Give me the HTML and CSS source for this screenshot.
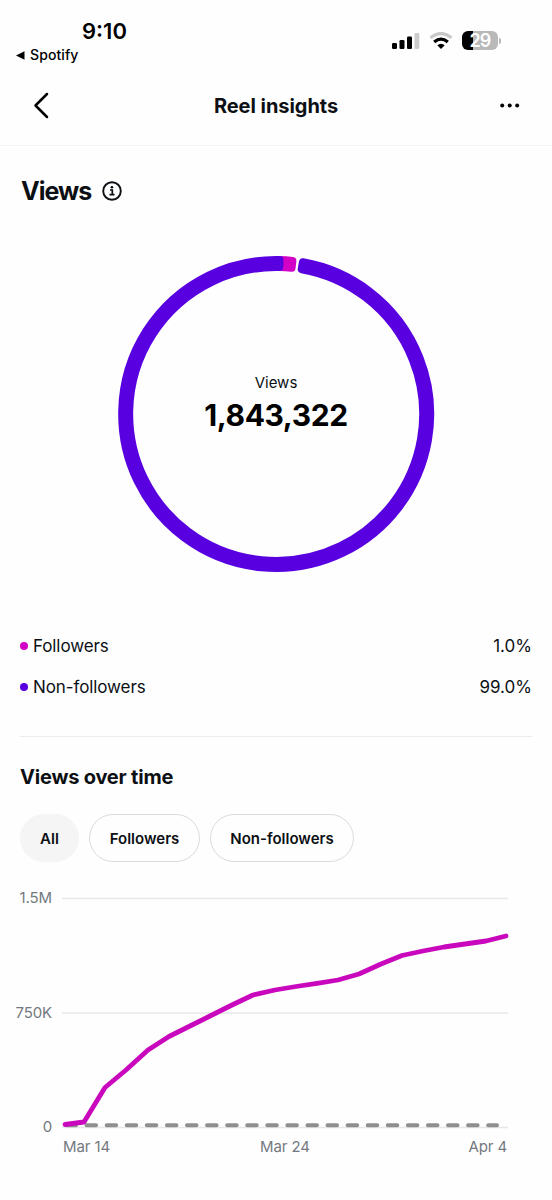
FILE: index.html
```html
<!DOCTYPE html>
<html lang="en">
<head>
<meta charset="utf-8">
<title>Reel insights</title>
<link rel="stylesheet" href="styles.css">
</head>
<body>
<div class="status">
  <div class="status-left">
    <div class="clock">9:10</div>
    <div class="return-app"><svg width="9" height="9" viewBox="0 0 9 9"><path d="M0 4.5 8.500 .3V8.700Z"/></svg><span>Spotify</span></div>
  </div>
  <div class="status-right">
    <svg class="signal" width="28" height="18" viewBox="0 0 28 18"><rect x="0" y="11" width="5" height="6" rx="1.3"/><rect x="7.500" y="8" width="5" height="9" rx="1.3"/><rect x="15" y="4.500" width="5" height="12.500" rx="1.3"/><rect x="22.500" y="1" width="4.800" height="16" rx="1.3" fill="#ccc"/></svg>
    <svg class="wifi" width="24" height="18" viewBox="0 0 24 18"><path d="M1.500 5.700Q12-2.700 22.500 5.700" fill="none" stroke="#c8c8c8" stroke-width="3.200"/><path d="M5.200 10Q12 4.200 18.800 10" fill="none" stroke="#000" stroke-width="3.300"/><path d="M8.300 13.300Q12 10 15.700 13.300L12 17Z"/></svg>
    <div class="battery"><span>29</span></div>
    <div class="battery-tip"></div>
  </div>
</div>
<header class="header">
  <svg width="40" height="30" viewBox="0 0 40 30"><path d="M27 4 15.500 15.500 27 27" fill="none" stroke="#000" stroke-width="2.500" stroke-linecap="round" stroke-linejoin="round"/></svg>
  <h1>Reel insights</h1>
  <svg class="more" width="40" height="30" viewBox="0 0 40 30"><circle cx="10.200" cy="15.500" r="2"/><circle cx="17.700" cy="15.500" r="2"/><circle cx="25.200" cy="15.500" r="2"/></svg>
</header>
<main>
  <section class="views">
    <div class="views-title">
      <h2>Views</h2>
      <svg width="20" height="20" viewBox="0 0 20 20"><circle cx="10" cy="10" r="8.800" fill="none" stroke="#0c1014" stroke-width="1.900"/><circle cx="9.900" cy="6.300" r="1.300"/><path d="M8 9h2.300v4.500M7.500 13.700h5" fill="none" stroke="#0c1014" stroke-width="1.700"/></svg>
    </div>
    <div class="donut">
      <svg width="320" height="320" viewBox="116 254 320 320" stroke-width="8" stroke-linejoin="round">
        <path d="M279.500 260A154 154 0 0 1 292.400 260.900L291.600 267.800A147 147 0 0 0 279.300 267Z" fill="#d300c5" stroke="#d300c5"/>
        <path d="M302.900 262.300A154 154 0 1 1 279.500 260L279.300 267A147 147 0 1 0 301.700 269.200Z" fill="#5800df" stroke="#5800df"/>
      </svg>
      <div class="donut-label"><span class="donut-name">Views</span><strong>1,843,322</strong></div>
    </div>
    <div class="legend">
      <div class="row"><i class="dot pink"></i><span class="name">Followers</span><span class="value">1.0%</span></div>
      <div class="row"><i class="dot violet"></i><span class="name">Non-followers</span><span class="value">99.0%</span></div>
    </div>
  </section>
  <section class="time">
    <h3>Views over time</h3>
    <div class="chips">
      <button class="chip active">All</button><button class="chip followers">Followers</button><button class="chip non">Non-followers</button>
    </div>
    <div class="chart">
      <div class="y-axis"><span>1.5M</span><span>750K</span><span>0</span></div>
      <div class="plot">
        <svg width="450" height="240" viewBox="62 893 450 240" fill="none">
          <path d="M62 898.500H508M62 1013H508M62 1127.500H508" stroke="#e6e7e8" stroke-width="1.300"/>
          <path d="M66.500 1125.300H497" stroke="#8e8e8e" stroke-width="4" stroke-linecap="round" stroke-dasharray="9.500 10.580"/>
          <path d="M65 1124.500 84 1122 105 1087.500 126 1070 148 1050 169 1036.500 190 1026 211 1015.500 232 1005 253 995 275 990 296 986.500 317 983.300 338 980 359 974 381 964 402 955.500 423 951 444 947 465 944 486 941 506 936" stroke="#c908bd" stroke-width="4.800" stroke-linecap="round" stroke-linejoin="round"/>
        </svg>
        <div class="x-axis"><span>Mar 14</span><span>Mar 24</span><span>Apr 4</span></div>
      </div>
    </div>
  </section>
</main>
</body>
</html>
```
FILE: styles.css
```css
* { box-sizing: border-box; }
body { margin: 0; height: 1200px; background: #fefefe; color: #0c1014; font-family: Inter, "Noto Sans", sans-serif; overflow: hidden; }
h1, h2, h3 { margin: 0; font-weight: 700; white-space: nowrap; }
svg { display: block; flex: none; }
.status { display: flex; justify-content: space-between; height: 76px; color: #000; }
.status-left { padding-top: 17px; }
.clock { padding-left: 82px; font-size: 22px; line-height: 29px; font-weight: 600; }
.return-app { display: flex; align-items: center; gap: 5px; padding-left: 16px; font-size: 14px; line-height: 18px; font-weight: 500; letter-spacing: .1px; }
.status-right { display: flex; align-items: flex-start; padding: 31px 51px 0 0; }
.wifi { margin: 1px 9px 0 9px; }
.signal { margin-top: 1px; }
.battery { width: 36px; height: 19px; border-radius: 6px; background: linear-gradient(90deg, #000 11px, #b9b9b9 11px); color: #fff; font-size: 18px; line-height: 19px; font-weight: 600; letter-spacing: -.8px; text-align: center; }
.battery-tip { width: 2px; height: 6px; margin: 7px 0 0 1px; border-radius: 0 2px 2px 0; background: #b9b9b9; }
.header { display: flex; align-items: center; justify-content: space-between; height: 70px; padding: 0 20px 11px 20px; border-bottom: 1px solid #f3f4f5; }
.header h1 { padding-top: 1px; font-size: 20px; line-height: 24px; letter-spacing: -.05px; }
main { padding: 0 20px; }
.views { height: 591px; border-bottom: 1px solid #ebecee; }
.views-title { display: flex; align-items: center; gap: 11px; height: 91px; padding: 0 0 1px 1px; }
.views-title h2 { font-size: 25px; letter-spacing: -1px; }
.donut { display: grid; place-items: center; width: 320px; margin: 17px auto 0; }
.donut > * { grid-area: 1 / 1; }
.donut-label { display: flex; flex-direction: column; align-items: center; margin-top: -23px; }
.donut-name { font-size: 15px; line-height: 20px; letter-spacing: 0; }
.donut-label strong { margin-top: 4px; font-size: 30px; line-height: 36px; font-weight: 700; letter-spacing: -.4px; color: #000; }
.legend { margin-top: 51px; }
.row { display: flex; align-items: center; height: 41px; font-size: 17px; }
.name { letter-spacing: -.1px; }
.dot { width: 8px; height: 8px; border-radius: 50%; margin-right: 5px; }
.pink { background: #d300c5; }
.violet { background: #5800df; }
.value { margin-left: auto; }
.time h3 { padding: 28px 0 0; font-size: 20px; line-height: 24px; letter-spacing: -.2px; }
.chips { display: flex; gap: 10px; margin-top: 25px; }
.chip { height: 48px; padding: 0; border: 1px solid #d9dbde; border-radius: 24px; background: transparent; font: 600 15px Inter, sans-serif; color: #0c1014; }
.active { width: 59px; border-color: #f5f5f5; background: #f5f5f5; }
.followers { width: 111px; }
.non { width: 144px; }
.chart { display: flex; gap: 10px; margin: 31px -10px 0 -8px; color: #737980; font-size: 15px; }
.y-axis { display: flex; flex-direction: column; justify-content: space-between; width: 40px; height: 247px; margin-top: -4px; text-align: right; line-height: 18px; letter-spacing: -.1px; }
.x-axis { display: grid; grid-template-columns: 1fr auto 1fr; width: 445px; padding-left: 1px; margin-top: 5px; line-height: 18px; letter-spacing: -.1px; }
.x-axis span:last-child { text-align: right; }
```
